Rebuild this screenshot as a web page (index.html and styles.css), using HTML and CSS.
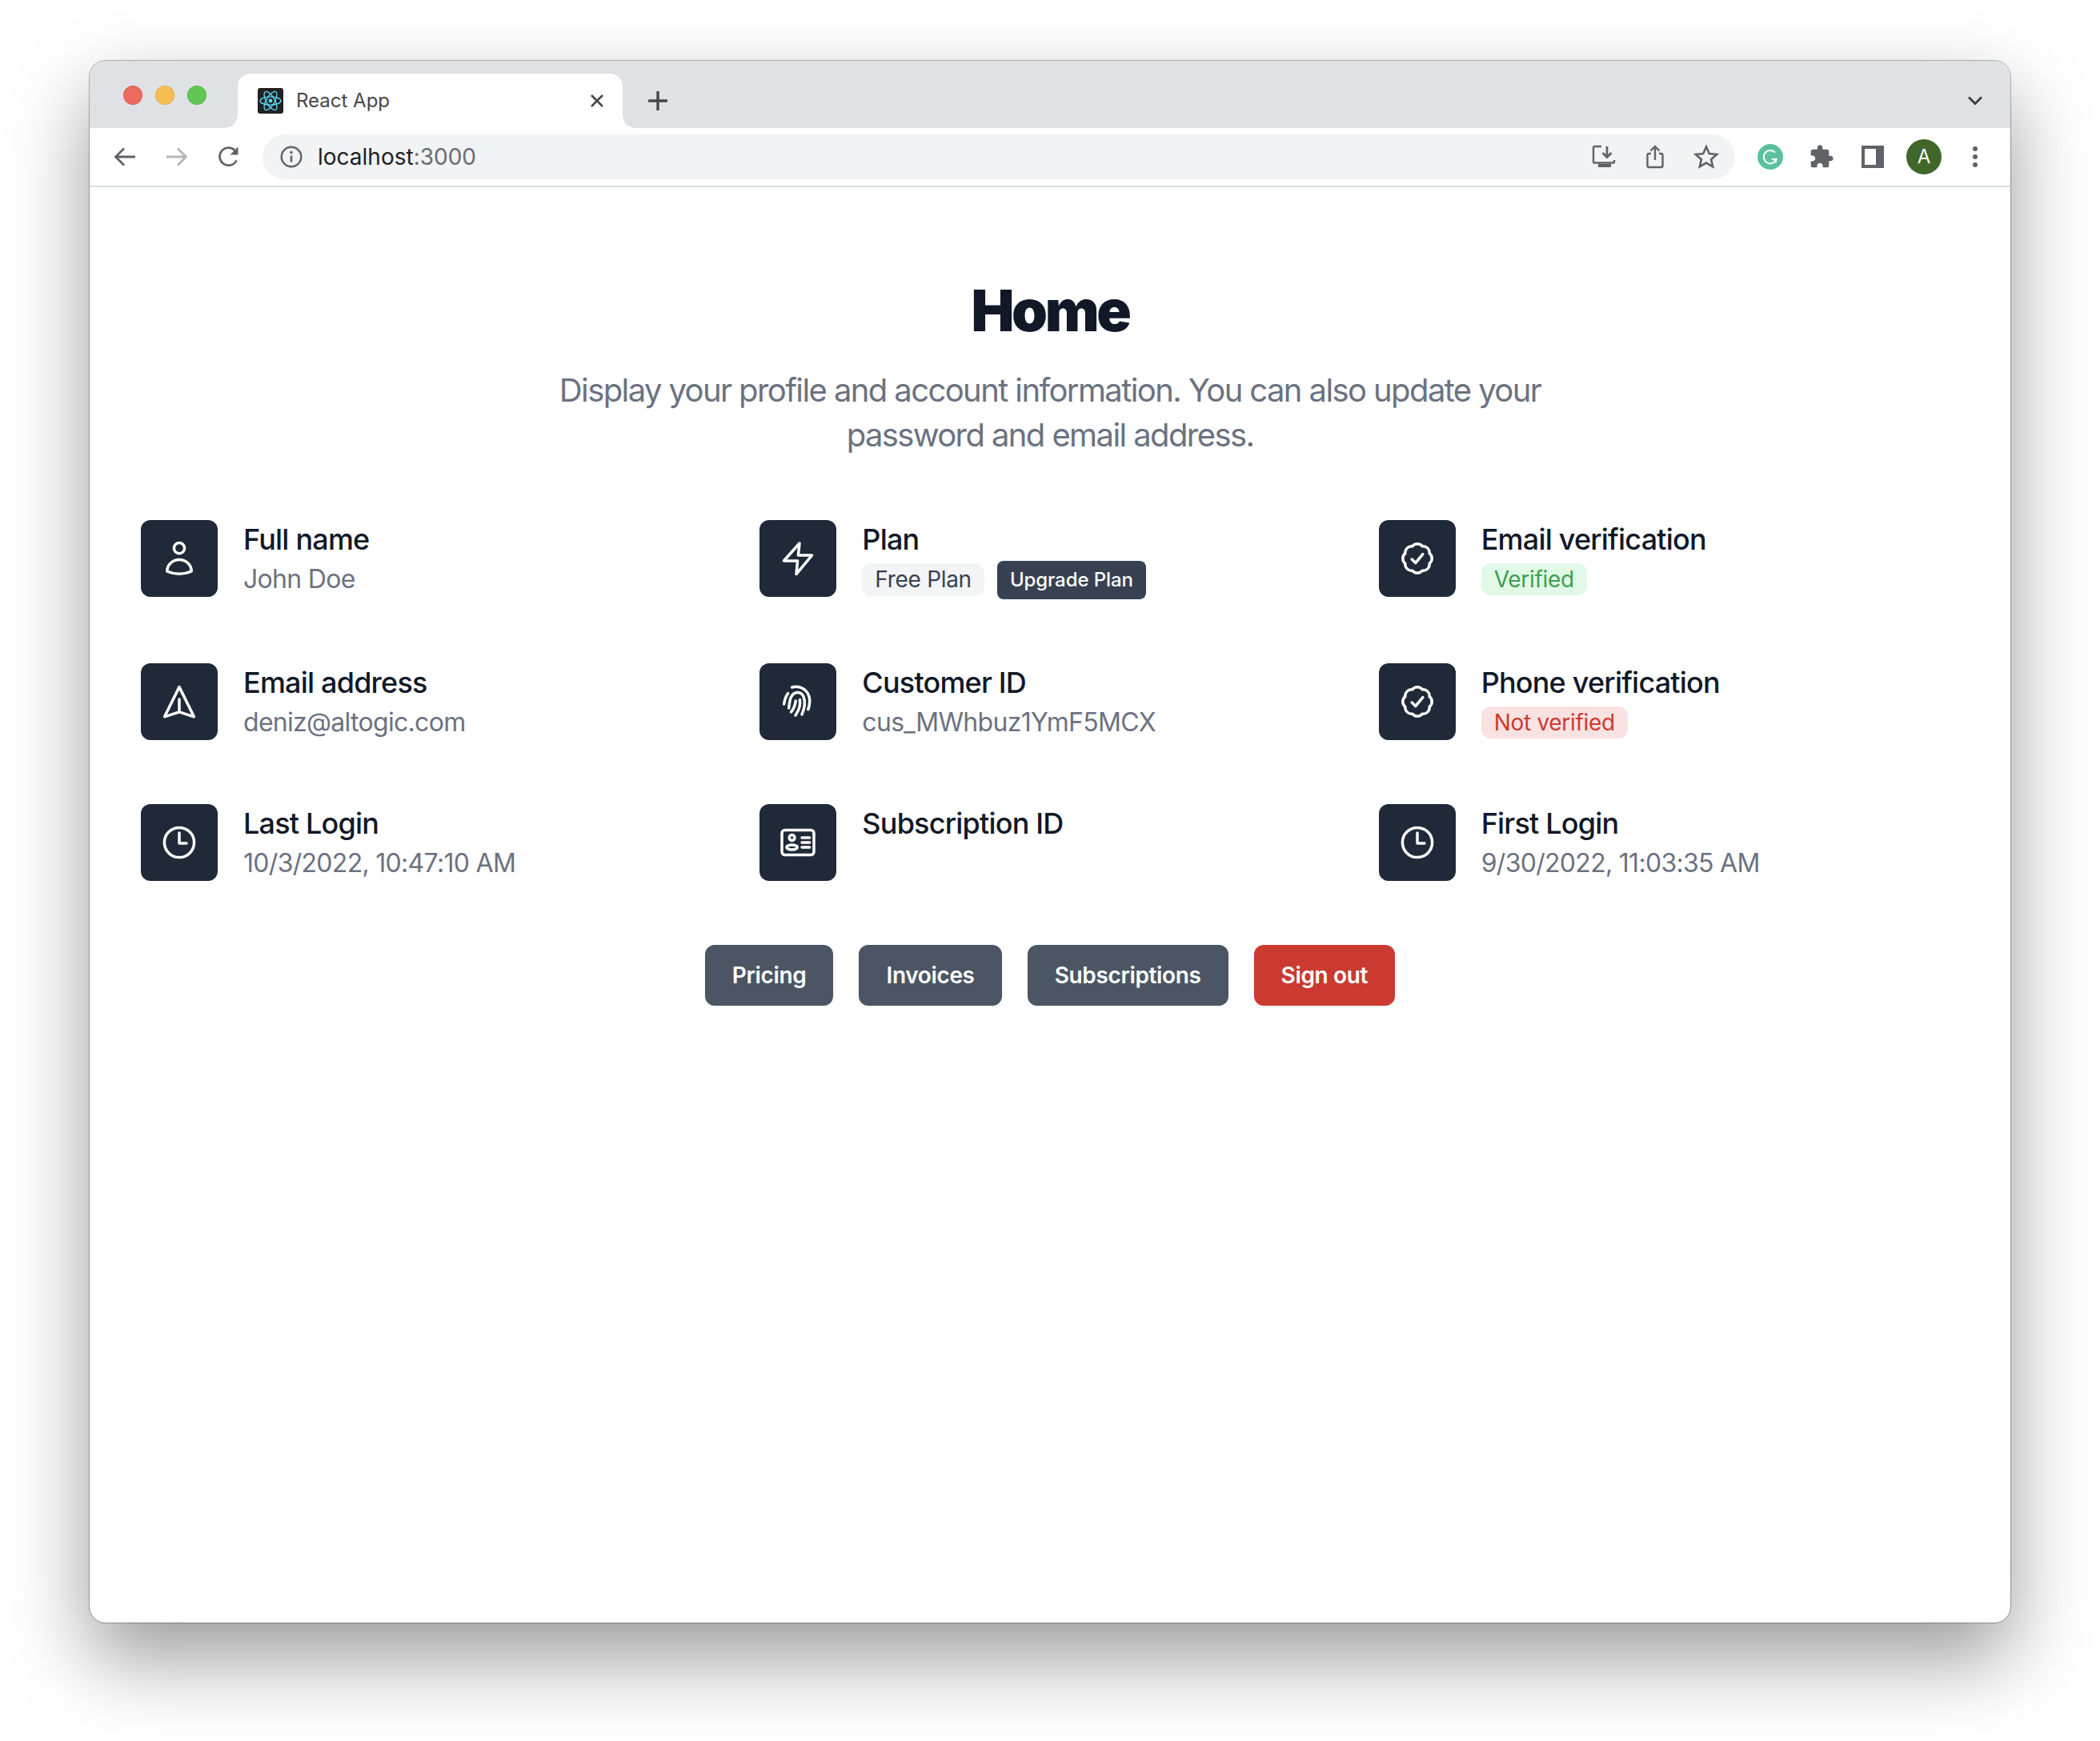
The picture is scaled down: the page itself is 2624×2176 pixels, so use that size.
FILE: index.html
```html
<!DOCTYPE html>
<html lang="en">
<head>
<meta charset="utf-8">
<title>React App</title>
<link rel="stylesheet" href="styles.css">
</head>
<body>
<div class="window">
  <div class="tabstrip">
    <div class="lights"><span class="light red"></span><span class="light yellow"></span><span class="light green"></span></div>
    <div class="tab">
      <svg class="favicon" viewBox="0 0 32 32"><rect width="32" height="32" rx="3" fill="#222"/><g fill="none" stroke="#61dafb" stroke-width="1.3"><ellipse cx="16" cy="16" rx="13" ry="5.2"/><ellipse cx="16" cy="16" rx="13" ry="5.2" transform="rotate(60 16 16)"/><ellipse cx="16" cy="16" rx="13" ry="5.2" transform="rotate(120 16 16)"/></g><circle cx="16" cy="16" r="2.4" fill="#61dafb"/></svg>
      <span class="tab-title">React App</span>
      <svg class="tab-close" viewBox="0 0 18 18"><path d="M2 2l14 14M16 2L2 16" stroke="#45474a" stroke-width="2.6" fill="none"/></svg>
    </div>
    <svg class="newtab" viewBox="0 0 24 24"><path d="M12 1v22M1 12h22" stroke="#45474a" stroke-width="3.4" stroke-linecap="round" fill="none"/></svg>
    <svg class="tabmenu" viewBox="0 0 20 20"><path d="M2 5.5l8 8 8-8" stroke="#3c4043" stroke-width="2.8" fill="none"/></svg>
  </div>
  <div class="toolbar">
    <button class="tool"><svg viewBox="0 0 32 32"><path d="M29 16H5M15 5.500L4.500 16 15 26.500" stroke="#5f6368" stroke-width="2.800" fill="none"/></svg></button>
    <button class="tool"><svg viewBox="0 0 32 32"><path d="M3 16h24M17 5.500L27.500 16 17 26.500" stroke="#b4b6b9" stroke-width="2.800" fill="none"/></svg></button>
    <button class="tool"><svg viewBox="0 0 32 32"><path d="M25.500 20.500A11 11 0 1 1 23.500 8" stroke="#5f6368" stroke-width="2.800" fill="none"/><path d="M27.500 3.500v10h-10z" fill="#5f6368"/></svg></button>
    <div class="omnibox">
      <svg class="info" viewBox="0 0 28 28"><circle cx="14" cy="14" r="12.300" stroke="#5f6368" stroke-width="2.400" fill="none"/><path d="M14 12.500v8" stroke="#5f6368" stroke-width="2.600"/><circle cx="14" cy="8.500" r="1.700" fill="#5f6368"/></svg>
      <span class="url">localhost<span class="port">:3000</span></span>
      <div class="omni-actions">
        <span class="omni-btn"><svg viewBox="0 0 32 32"><path d="M13 3H4.500A1.500 1.500 0 0 0 3 4.500V22a1.500 1.500 0 0 0 1.500 1.500h23A1.500 1.500 0 0 0 29 22v-2" stroke="#5f6368" stroke-width="2.400" fill="none"/><path d="M20 3v13M14.500 11l5.500 5.500L25.500 11" stroke="#5f6368" stroke-width="2.800" fill="none"/><rect x="9" y="25" width="16" height="4" fill="#5f6368"/></svg></span>
        <span class="omni-btn"><svg viewBox="0 0 32 32"><path d="M11 12H8.500A2 2 0 0 0 6.500 14v13A2 2 0 0 0 8.500 29h15a2 2 0 0 0 2-2V14a2 2 0 0 0-2-2H21" stroke="#5f6368" stroke-width="2.400" fill="none"/><path d="M16 20V3.500M10.500 8.500L16 3l5.500 5.500" stroke="#5f6368" stroke-width="2.400" fill="none"/></svg></span>
        <span class="omni-btn"><svg viewBox="0 0 32 32"><path d="M16 3.500l3.800 8.600 9.400.9-7.100 6.200 2.100 9.200L16 23.600l-8.200 4.800 2.100-9.200L2.800 13l9.400-.9z" stroke="#5f6368" stroke-width="2.600" stroke-linejoin="miter" fill="none"/></svg></span>
      </div>
    </div>
    <div class="extensions">
      <span class="ext"><svg class="grammarly" viewBox="0 0 32 32"><circle cx="16" cy="16" r="16" fill="#5bc29f"/><path d="M22 10.500A8.200 8.200 0 1 0 23.800 19h-6" stroke="#fff" stroke-width="2" fill="none"/><path d="M24 24l-.5-5-4.500 .5z" fill="#fff"/></svg></span>
      <span class="ext"><svg class="puzzle" viewBox="0 0 24 24"><path fill="#5f6368" d="M20.500 11H19V7c0-1.100-.9-2-2-2h-4V3.500C13 2.120 11.880 1 10.500 1S8 2.120 8 3.500V5H4c-1.100 0-1.990.9-1.990 2v3.800H3.500c1.490 0 2.700 1.210 2.700 2.700s-1.210 2.700-2.700 2.700H2V20c0 1.100.9 2 2 2h3.800v-1.500c0-1.490 1.210-2.700 2.700-2.700 1.490 0 2.700 1.210 2.700 2.700V22H17c1.100 0 2-.9 2-2v-4h1.500c1.380 0 2.500-1.120 2.500-2.500S21.880 11 20.500 11z"/></svg></span>
      <span class="ext"><span class="sidepanel"></span></span>
      <span class="ext"><span class="avatar">A</span></span>
      <span class="ext"><svg class="kebab" viewBox="0 0 8 28"><circle cx="4" cy="4" r="3" fill="#5f6368"/><circle cx="4" cy="14" r="3" fill="#5f6368"/><circle cx="4" cy="24" r="3" fill="#5f6368"/></svg></span>
    </div>
  </div>
  <main class="page">
    <h1 class="title">Home</h1>
    <p class="lead">Display your profile and account information. You can also update your password and email address.</p>
    <section class="grid">
      <div class="item">
        <div class="icon"><svg viewBox="0 0 24 24"><circle cx="12" cy="5.600" r="3.300"/><path d="M4.400 20C4.400 16 7.800 12.800 12 12.800S19.600 16 19.600 20C15 22.100 9 22.100 4.400 20Z"/></svg></div>
        <div class="info-col"><div class="label">Full name</div><div class="value">John Doe</div></div>
      </div>
      <div class="item">
        <div class="icon"><svg viewBox="0 0 24 24"><path d="M13 2.500L3.200 13.500H11.800L11 21.800 20.800 10H12.200Z"/></svg></div>
        <div class="info-col"><div class="label">Plan</div><div class="plan-row"><span class="badge gray">Free Plan</span><button class="upgrade">Upgrade Plan</button></div></div>
      </div>
      <div class="item">
        <div class="icon"><svg viewBox="0 0 24 24"><path d="M15.140 4.420A4 4 0 0 1 19.580 8.860A4 4 0 0 1 19.580 15.140A4 4 0 0 1 15.140 19.580A4 4 0 0 1 8.860 19.580A4 4 0 0 1 4.420 15.140A4 4 0 0 1 4.420 8.860A4 4 0 0 1 8.860 4.420A4 4 0 0 1 15.140 4.420Z"/><path d="M8.600 12.500l2.300 2.300 4.500-5.500"/></svg></div>
        <div class="info-col"><div class="label">Email verification</div><span class="badge green">Verified</span></div>
      </div>
      <div class="item">
        <div class="icon"><svg viewBox="0 0 24 24"><path d="M12 2.800L2.800 21.400 12 18.400 21.200 21.400Z"/><path d="M12 10.500V18.400"/></svg></div>
        <div class="info-col"><div class="label">Email address</div><div class="value">deniz@altogic.com</div></div>
      </div>
      <div class="item">
        <div class="icon"><svg viewBox="0 0 24 24"><path d="M8.300 3C13 1.800 17.500 4 19 8.800 19.600 11 19.400 14 18.400 16.800"/><path d="M5.800 6.800C4.300 8.700 3.700 11 3.300 13.500"/><path d="M6.300 16C6.800 13.500 6.700 11 7.800 9 9.500 5.700 13.700 5 15.500 8.800 16.800 12 16 16.500 14.500 20"/><path d="M7.800 18.500C9.300 16.500 10.300 14.500 10.600 11.500"/><path d="M13.200 10.800C13.800 14 12.500 17.500 10.500 20.500"/></svg></div>
        <div class="info-col"><div class="label">Customer ID</div><div class="value">cus_MWhbuz1YmF5MCX</div></div>
      </div>
      <div class="item">
        <div class="icon"><svg viewBox="0 0 24 24"><path d="M15.140 4.420A4 4 0 0 1 19.580 8.860A4 4 0 0 1 19.580 15.140A4 4 0 0 1 15.140 19.580A4 4 0 0 1 8.860 19.580A4 4 0 0 1 4.420 15.140A4 4 0 0 1 4.420 8.860A4 4 0 0 1 8.860 4.420A4 4 0 0 1 15.140 4.420Z"/><path d="M8.600 12.500l2.300 2.300 4.500-5.500"/></svg></div>
        <div class="info-col"><div class="label">Phone verification</div><span class="badge red">Not verified</span></div>
      </div>
      <div class="item">
        <div class="icon"><svg viewBox="0 0 24 24"><circle cx="12" cy="12" r="9.300"/><path d="M12 6V12.500H16.500"/></svg></div>
        <div class="info-col"><div class="label">Last Login</div><div class="value">10/3/2022, 10:47:10 AM</div></div>
      </div>
      <div class="item">
        <div class="icon"><svg viewBox="0 0 24 24"><rect x="2" y="4.200" width="20" height="15.600" rx="2"/><circle cx="8.300" cy="9" r="1.700"/><ellipse cx="8.300" cy="15" rx="3.400" ry="1.500"/><path d="M14.500 9H19.300M14.500 12H19.300M14.500 15H19.300"/></svg></div>
        <div class="info-col"><div class="label">Subscription ID</div></div>
      </div>
      <div class="item">
        <div class="icon"><svg viewBox="0 0 24 24"><circle cx="12" cy="12" r="9.300"/><path d="M12 6V12.500H16.500"/></svg></div>
        <div class="info-col"><div class="label">First Login</div><div class="value">9/30/2022, 11:03:35 AM</div></div>
      </div>
    </section>
    <div class="actions">
      <button class="action">Pricing</button>
      <button class="action">Invoices</button>
      <button class="action">Subscriptions</button>
      <button class="action danger">Sign out</button>
    </div>
  </main>
</div>
</body>
</html>
```

FILE: styles.css
```css
* { box-sizing: border-box; }
html, body { margin: 0; background: #fff; }
body {
  width: 2624px;
  height: 2176px;
  padding: 76px 112px 148px;
  overflow: hidden;
  font-family: Inter, "Liberation Sans", sans-serif;
}
button { font-family: inherit; border: 0; cursor: pointer; }
svg { display: block; }

.window {
  height: 1952px;
  background: #fff;
  border-radius: 20px;
  box-shadow: 0 0 0 1px rgba(0, 0, 0, .28), 0 44px 100px 0 rgba(0, 0, 0, .4);
}

.tabstrip {
  height: 84px;
  display: flex;
  align-items: flex-start;
  background: #dfe1e5;
  border-radius: 20px 20px 0 0;
  padding-top: 16px;
}
.lights { width: 185px; padding: 15px 0 0 42px; display: flex; gap: 16px; flex: none; }
.light { width: 24px; height: 24px; border-radius: 50%; border: 1px solid rgba(0, 0, 0, .08); }
.light.red { background: #ed6a5e; }
.light.yellow { background: #f5bf4f; }
.light.green { background: #62c554; }

.tab {
  position: relative;
  width: 481px;
  height: 68px;
  flex: none;
  display: flex;
  align-items: center;
  padding: 0 23px 0 25px;
  background: #fff;
  border-radius: 16px 16px 0 0;
}
.tab::before, .tab::after {
  content: "";
  position: absolute;
  bottom: 0;
  width: 16px;
  height: 16px;
  background: radial-gradient(circle at var(--cx) 0, #dfe1e5 15.5px, #fff 16px);
}
.tab::before { left: -16px; --cx: 0; }
.tab::after { right: -16px; --cx: 16px; }
.favicon { width: 32px; height: 32px; flex: none; margin-top: 0; }
.tab-title { margin-left: 16px; font-size: 24px; line-height: 32px; color: #45474a; flex: 1; white-space: nowrap; }
.tab-close { width: 18px; height: 18px; flex: none; }
.newtab { width: 24px; height: 24px; margin: 22px 0 0 32px; flex: none; }
.tabmenu { width: 20px; height: 20px; margin: 24px 34px 0 auto; flex: none; }

.toolbar {
  height: 74px;
  display: flex;
  align-items: flex-start;
  padding: 8px 12px 0 11px;
  background: #fff;
  border-bottom: 2px solid #dadce0;
}
.tool {
  width: 65px;
  height: 56px;
  flex: none;
  padding: 0;
  background: none;
  display: flex;
  align-items: center;
  justify-content: center;
}
.tool svg { width: 32px; height: 32px; }
.omnibox {
  margin-left: 10px;
  flex: 1;
  height: 56px;
  display: flex;
  align-items: center;
  padding: 0 4px 0 22px;
  background: #f1f3f4;
  border-radius: 28px;
}
.info { width: 28px; height: 28px; flex: none; }
.url { margin-left: 19px; font-size: 28px; line-height: 40px; color: #202124; white-space: nowrap; }
.port { color: #6a6c70; }
.omni-actions { margin-left: auto; display: flex; }
.omni-btn { width: 64px; height: 56px; display: flex; align-items: center; justify-content: center; }
.omni-btn svg { width: 32px; height: 32px; }
.extensions { margin-left: 12px; display: flex; }
.ext { width: 64px; height: 56px; display: flex; align-items: center; justify-content: center; }
.grammarly, .puzzle { width: 32px; height: 32px; }
.sidepanel { width: 28px; height: 28px; background: #fff; border: solid #5f6368; border-width: 4px 10px 4px 4px; }
.avatar {
  width: 44px;
  height: 44px;
  border-radius: 50%;
  background: #41662a;
  color: #fff;
  font-size: 24px;
  line-height: 44px;
  text-align: center;
}
.kebab { width: 8px; height: 28px; }

.page { padding: 114px 64px 0; }
.title {
  margin: 0;
  text-align: center;
  font-size: 72px;
  line-height: 80px;
  font-weight: 900;
  letter-spacing: -3.4px;
  color: #111827;
}
.lead {
  width: 1344px;
  margin: 32px auto 0;
  text-align: center;
  font-size: 40px;
  line-height: 56px;
  letter-spacing: -1.6px;
  color: #6b7280;
}
.grid {
  margin-top: 78px;
  display: grid;
  grid-template-columns: repeat(3, 1fr);
  gap: 80px 48px;
}
.item { display: flex; gap: 32px; align-items: flex-start; }
.icon {
  width: 96px;
  height: 96px;
  flex: none;
  display: flex;
  align-items: center;
  justify-content: center;
  border-radius: 12px;
  background: #1f2937;
}
.icon svg {
  width: 48px;
  height: 48px;
  fill: none;
  stroke: #fff;
  stroke-width: 1.75;
  stroke-linecap: round;
  stroke-linejoin: round;
}
.label { font-size: 36px; line-height: 48px; font-weight: 500; letter-spacing: -0.8px; color: #111827; }
.value { font-size: 32px; line-height: 48px; margin: 2px 0 -2px; letter-spacing: -0.7px; color: #6b7280; }
.plan-row { display: flex; align-items: flex-start; gap: 16px; margin-top: 3px; }
.badge {
  display: inline-block;
  height: 40px;
  margin-top: 6px;
  padding: 0 16px;
  border-radius: 12px;
  font-size: 28px;
  line-height: 40px;
  letter-spacing: -0.3px;
  white-space: nowrap;
}
.plan-row .badge { margin-top: 3px; }
.badge.gray { background: #f3f4f6; color: #374151; box-shadow: 0 1px 2px rgba(0, 0, 0, .05); }
.badge.green { background: #e1f9e6; color: #3c9f4e; }
.badge.red { background: #f9e2e2; color: #cb3a31; }
.upgrade {
  height: 48px;
  padding: 0 16px;
  border-radius: 8px;
  background: #374151;
  color: #fff;
  font-size: 24px;
  line-height: 48px;
  font-weight: 500;
  letter-spacing: -0.1px;
  white-space: nowrap;
}
.actions { margin-top: 80px; display: flex; justify-content: center; gap: 32px; }
.action {
  height: 76px;
  padding: 0 34px;
  border-radius: 12px;
  background: #4b5563;
  color: #fff;
  font-size: 28px;
  font-weight: 600;
  letter-spacing: -0.35px;
  box-shadow: 0 2px 4px rgba(0, 0, 0, .05);
}
.action.danger { background: #cb3a31; }
```
